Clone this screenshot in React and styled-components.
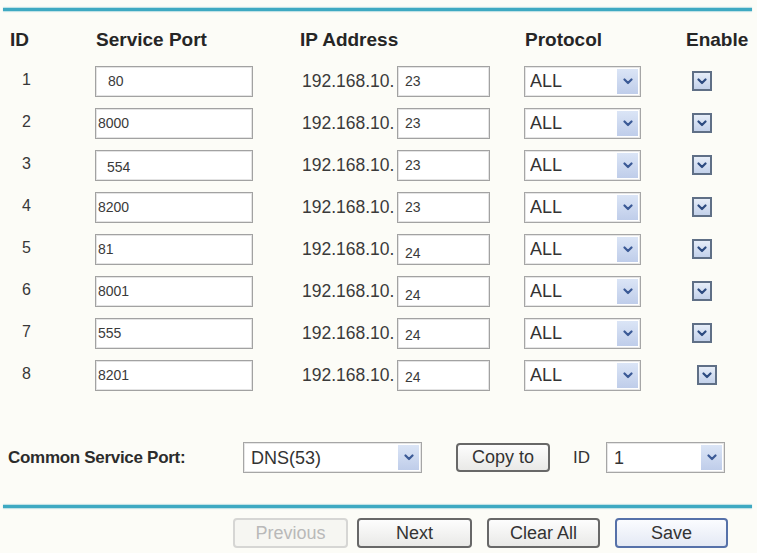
import React from 'react';
import styled, { createGlobalStyle } from 'styled-components';

const GlobalStyle = createGlobalStyle`
  html, body {
    margin: 0;
    padding: 0;
    background: #fcfcf7;
  }
  body {
    font-family: "Liberation Sans", Arial, sans-serif;
    color: #383838;
  }
`;

const COLUMNS = '94px 206px 224px 162px 71px';

const Page = styled.div`
  width: 757px;
  height: 553px;
  padding-top: 8px;
  box-sizing: border-box;
  overflow: hidden;
`;

const Rule = styled.div`
  height: 3px;
  margin: ${(p) => p.$top || 0}px 5px 0 3px;
  background: #3ea9c2;
  box-shadow: 0 1px 1px rgba(62, 169, 194, 0.35), 0 -1px 1px rgba(62, 169, 194, 0.35);
`;

const HeaderRow = styled.div`
  display: grid;
  grid-template-columns: ${COLUMNS};
  height: 49px;
  padding-top: 18px;
  box-sizing: border-box;
`;

const HeaderCell = styled.div`
  font-size: 19px;
  font-weight: bold;
  line-height: 22px;
  color: #262626;
  padding-left: ${(p) => p.$pad || 0}px;
  white-space: nowrap;
`;

const Row = styled.div`
  display: grid;
  grid-template-columns: ${COLUMNS};
  height: 42px;
  align-items: center;
`;

const IdCell = styled.div`
  padding-left: 22px;
  font-size: 16px;
  margin-top: -3px;
`;

const TextBox = styled.input`
  box-sizing: border-box;
  width: ${(p) => p.$w}px;
  height: 31px;
  margin: 0 0 0 ${(p) => p.$ml || 0}px;
  border: 1px solid #a2a2a2;
  box-shadow: inset 0 0 0 1px #e4e4e4;
  background: #fff;
  font-family: "Liberation Sans", Arial, sans-serif;
  font-size: 14px;
  color: #3a3a3a;
  padding: ${(p) => p.$pt || 0}px 0 0 ${(p) => p.$pl}px;
  outline: none;
`;

const IpCell = styled.div`
  display: flex;
  align-items: center;
`;

const IpPrefix = styled.span`
  width: 97px;
  box-sizing: border-box;
  padding-left: 2px;
  font-size: 17.5px;
  color: #3a3a3a;
`;

const SelectBox = styled.div`
  display: flex;
  box-sizing: border-box;
  width: ${(p) => p.$w}px;
  height: 31px;
  border: 1px solid #a6a6a6;
  box-shadow: inset 0 0 0 1px #e6e6e6;
  background: #fff;
`;

const NativeSelect = styled.select`
  flex: 1;
  min-width: 0;
  appearance: none;
  border: none;
  background: transparent;
  outline: none;
  font-family: "Liberation Sans", Arial, sans-serif;
  font-size: ${(p) => p.$fs || 18}px;
  color: #333;
  padding: 0 0 0 ${(p) => p.$pl || 5}px;
  margin: 0;
`;

const ArrowBox = styled.span`
  width: 21px;
  margin: 2px 2px 2px 0;
  background: linear-gradient(#dbe5f6, #bfcdea);
  display: flex;
  align-items: center;
  justify-content: center;
`;

const Chevron = ({ size = 10, color = '#3b5a96' }) => (
  <svg width={size} height={size * 0.7} viewBox="0 0 10 7">
    <path d="M1.5 1.5 L5 5 L8.5 1.5" fill="none" stroke={color} strokeWidth="2.2" strokeLinecap="round" strokeLinejoin="round" />
  </svg>
);

const Select = ({ w, value, options, fs, pl }) => (
  <SelectBox $w={w}>
    <NativeSelect defaultValue={value} $fs={fs} $pl={pl}>
      {options.map((o) => (
        <option key={o} value={o}>{o}</option>
      ))}
    </NativeSelect>
    <ArrowBox>
      <Chevron />
    </ArrowBox>
  </SelectBox>
);

const CheckBox = styled.span`
  display: flex;
  align-items: center;
  justify-content: center;
  box-sizing: border-box;
  width: 20px;
  height: 20px;
  margin-left: ${(p) => 6 + (p.$shift || 0)}px;
  border: 2px solid #5f6f86;
  background: linear-gradient(#e6edf8, #c3d1ea);
`;

const CommonRow = styled.div`
  display: flex;
  align-items: center;
  height: 31px;
  margin-top: 46px;
`;

const CommonLabel = styled.div`
  width: 235px;
  padding-left: 8px;
  font-size: 17px;
  font-weight: bold;
  letter-spacing: -0.3px;
  color: #2c2c2c;
`;

const IdLabel = styled.span`
  width: 33px;
  margin-left: 23px;
  font-size: 17px;
  color: #333;
`;

const Button = styled.button`
  box-sizing: border-box;
  width: ${(p) => p.$w}px;
  height: ${(p) => p.$h || 30}px;
  margin-left: ${(p) => p.$ml || 0}px;
  border: 2px solid ${(p) => (p.$primary ? '#5671a9' : '#686868')};
  border-radius: 4px;
  background: ${(p) => (p.$primary ? 'linear-gradient(#fbfcff, #e4e9f4)' : 'linear-gradient(#fdfdfd, #e9e9e7)')};
  font-family: "Liberation Sans", Arial, sans-serif;
  font-size: 18px;
  color: #333;
  padding: 0;

  &:disabled {
    border-color: #d6d6d4;
    background: #f6f6f2;
    color: #b9b9b9;
  }
`;

const ButtonBar = styled.div`
  display: flex;
  justify-content: flex-end;
  gap: 15px;
  margin-top: 10px;
  padding-right: 29px;

  & > :first-child {
    margin-right: -6px;
  }
`;

const rows = [
  { id: 1, port: '80', ip: '23', indent: 10 },
  { id: 2, port: '8000', ip: '23', indent: 0 },
  { id: 3, port: '554', ip: '23', indent: 9, low: 4 },
  { id: 4, port: '8200', ip: '23', indent: 0 },
  { id: 5, port: '81', ip: '24', indent: 0, ipLow: 8 },
  { id: 6, port: '8001', ip: '24', indent: 0, ipLow: 8 },
  { id: 7, port: '555', ip: '24', indent: 0, ipLow: 4 },
  { id: 8, port: '8201', ip: '24', indent: 0, ipLow: 4, shift: 5 },
];

const protocols = ['ALL', 'TCP', 'UDP'];
const services = ['DNS(53)', 'FTP(21)', 'HTTP(80)', 'TELNET(23)', 'SMTP(25)'];

export default function App() {
  return (
    <Page>
      <GlobalStyle />
      <Rule />
      <HeaderRow>
        <HeaderCell $pad={10}>ID</HeaderCell>
        <HeaderCell $pad={2}>Service Port</HeaderCell>
        <HeaderCell>IP Address</HeaderCell>
        <HeaderCell $pad={1}>Protocol</HeaderCell>
        <HeaderCell>Enable</HeaderCell>
      </HeaderRow>
      {rows.map((r) => (
        <Row key={r.id}>
          <IdCell>{r.id}</IdCell>
          <div>
            <TextBox $w={158} $ml={1} $pl={2 + r.indent} $pt={r.low} defaultValue={r.port} />
          </div>
          <IpCell>
            <IpPrefix>192.168.10.</IpPrefix>
            <TextBox $w={93} $pl={7} $pt={r.ipLow} defaultValue={r.ip} />
          </IpCell>
          <div>
            <Select w={117} value="ALL" options={protocols} />
          </div>
          <div>
            <CheckBox $shift={r.shift} role="checkbox" aria-checked="true">
              <Chevron size={10} color="#2d4b80" />
            </CheckBox>
          </div>
        </Row>
      ))}
      <CommonRow>
        <CommonLabel>Common Service Port:</CommonLabel>
        <Select w={179} value="DNS(53)" options={services} fs={18} pl={7} />
        <Button $w={94} $h={29} $ml={34}>Copy to</Button>
        <IdLabel>ID</IdLabel>
        <Select w={119} value="1" options={rows.map((r) => String(r.id))} fs={18} pl={7} />
      </CommonRow>
      <Rule $top={32} />
      <ButtonBar>
        <Button $w={115} disabled>Previous</Button>
        <Button $w={115}>Next</Button>
        <Button $w={113}>Clear All</Button>
        <Button $w={113} $primary>Save</Button>
      </ButtonBar>
    </Page>
  );
}
